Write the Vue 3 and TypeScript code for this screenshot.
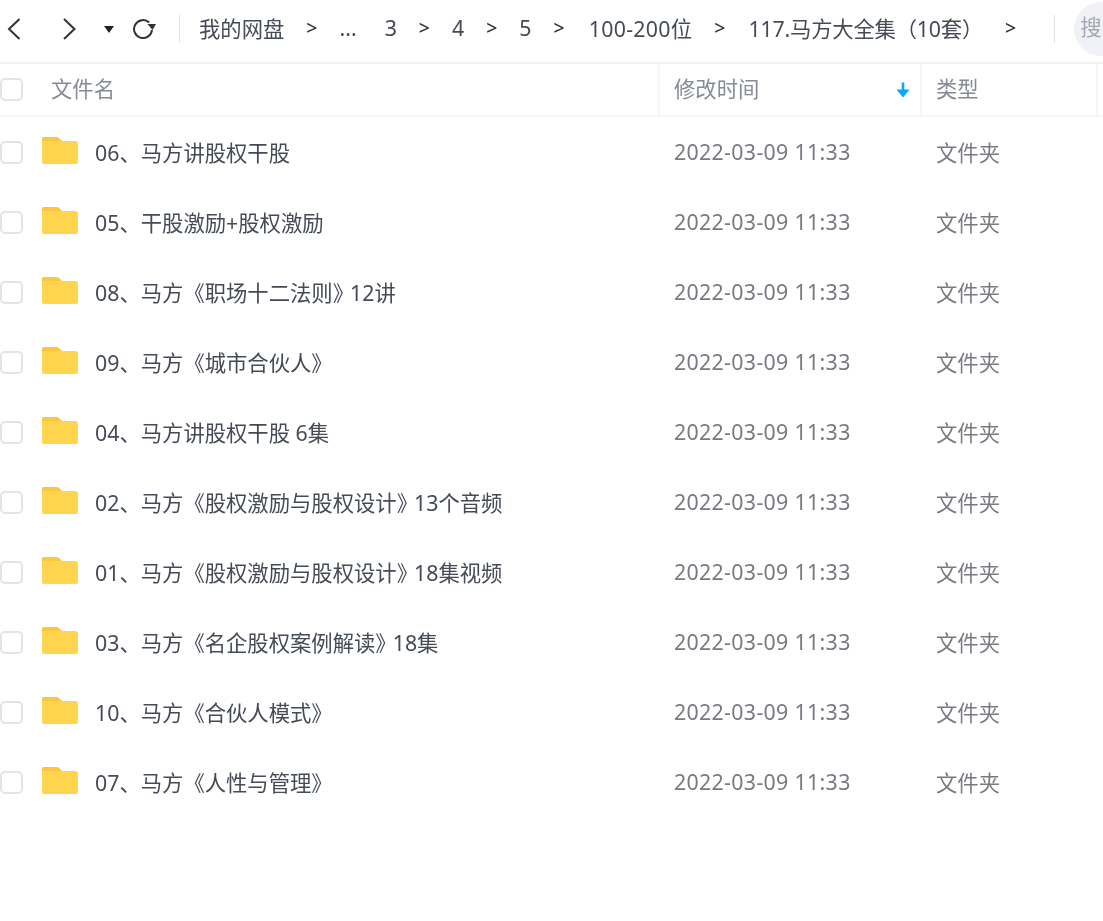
<script setup lang="ts">
interface FileRow { head: string; tail?: string }
interface Crumb { text: string; cls?: string }
const crumbs: Crumb[] = [
  { text: '4' },
  { text: '5' },
  { text: '100-200位', cls: 'wide' },
  { text: '117.马方大全集（10套）', cls: 'tight' },
]
const rows: FileRow[] = [
  { head: '06、马方讲股权干股' },
  { head: '05、干股激励+股权激励' },
  { head: '08、马方《职场十二法则', tail: '12讲' },
  { head: '09、马方《城市合伙人', tail: '' },
  { head: '04、马方讲股权干股 6集' },
  { head: '02、马方《股权激励与股权设计', tail: '13个音频' },
  { head: '01、马方《股权激励与股权设计', tail: '18集视频' },
  { head: '03、马方《名企股权案例解读', tail: '18集' },
  { head: '10、马方《合伙人模式', tail: '' },
  { head: '07、马方《人性与管理', tail: '' },
]
</script>

<template>
  <div class="page">
    <div class="toolbar">
      <svg class="nav back" width="14" height="24" viewBox="0 0 14 24"><path d="M12.5 2 L2 12 L12.5 22" /></svg>
      <svg class="nav forward" width="14" height="24" viewBox="0 0 14 24"><path d="M2 2 L12.5 12 L2 22" /></svg>
      <span class="caret"></span>
      <svg class="refresh" width="24" height="24" viewBox="0 0 24 24">
        <path d="M16.2 5.5 A9 9 0 1 0 19 13" fill="none" stroke="#333" stroke-width="2" />
        <path d="M14.5 7 H23 L19.5 13 Z" fill="#333" />
      </svg>
      <span class="divider"></span>
      <div class="crumbs">
        <span class="crumb">我的网盘</span>
        <span class="sep">&gt;</span>
        <span class="crumb dots">...</span>
        <span class="crumb">3</span>
        <template v-for="c in crumbs" :key="c.text">
          <span class="sep">&gt;</span>
          <span class="crumb" :class="c.cls">{{ c.text }}</span>
        </template>
        <span class="sep">&gt;</span>
      </div>
      <span class="divider end"></span>
      <div class="search">搜</div>
    </div>

    <div class="head">
      <div class="cell name-cell">
        <span class="check"></span>
        <span class="head-name label">文件名</span>
      </div>
      <div class="cell time-cell">
        <span class="label">修改时间</span>
        <svg class="sort" width="14" height="16" viewBox="0 0 14 16">
          <path d="M7 0.5 V10" stroke="#06a7ff" stroke-width="2.6" fill="none" />
          <path d="M0.5 7.5 H13.5 L7 15.5 Z" fill="#06a7ff" />
        </svg>
      </div>
      <div class="cell type-cell"><span class="label">类型</span></div>
      <div class="cell rest-cell"></div>
    </div>

    <div class="list">
      <div v-for="r in rows" :key="r.head" class="row">
        <div class="cell name-cell">
          <span class="check"></span>
          <svg class="folder" width="36" height="28" viewBox="0 0 36 28">
            <path d="M2 0 H14 Q16 0 17.5 1.5 L20 4 H33 Q36 4 36 7 V25 Q36 27 33 27 H3 Q0 27 0 25 V2 Q0 0 2 0 Z" fill="#ffd54f" />
            <path d="M2 0 H14 Q16 0 17.5 1.5 L20 4 H2 Q0 4 0 6 V2 Q0 0 2 0 Z" fill="#ffc53d" />
          </svg>
          <span class="file-name label">{{ r.head }}<template v-if="r.tail !== undefined"><span class="close">》</span>{{ r.tail }}</template></span>
        </div>
        <div class="cell time-cell body-time"><span class="label">2022-03-09 11:33</span></div>
        <div class="cell type-cell body-type"><span class="label">文件夹</span></div>
      </div>
    </div>
  </div>
</template>

<style>
html, body { margin: 0; background: #fff; }
</style>

<style scoped>
.page {
  width: 1103px;
  height: 921px;
  overflow: hidden;
  background: #fff;
  font-family: "Noto Sans", "Noto Sans CJK SC", sans-serif;
  font-size: 21.33px;
  filter: blur(0.4px);
}
.toolbar {
  height: 58px;
  padding: 0 0 4px 7px;
  display: flex;
  align-items: center;
  border-bottom: 2px solid #f1f2f4;
  white-space: nowrap;
}
.toolbar > * { flex: none; }
.nav path { fill: none; stroke: #333; stroke-width: 2; }
.forward { margin-left: 41px; }
.caret {
  margin-left: 28px;
  border-left: 5px solid transparent;
  border-right: 5px solid transparent;
  border-top: 7px solid #222;
}
.refresh { margin-left: 19px; }
.divider {
  width: 1px;
  height: 28px;
  background: #dfe1e5;
  margin-left: 22px;
}
.crumbs {
  display: flex;
  align-items: center;
  gap: 22px;
  margin-left: 19px;
  padding-bottom: 3px;
}
.crumb { color: #454b55; }
.crumb.wide { letter-spacing: 0.28px; margin-left: 2px; }
.crumb.tight { letter-spacing: -0.2px; margin-left: 1px; }
.sep { color: #333; font-size: 19.5px; font-weight: 500; }
.dots { margin-right: 6px; }
.divider.end { margin-left: 38px; }
.search {
  margin-left: 19px;
  width: 120px;
  height: 54px;
  line-height: 50px;
  padding-left: 6px;
  border-radius: 27px;
  background: #f1f2f7;
  color: #a4a8b2;
  box-sizing: border-box;
  overflow: hidden;
}
.head {
  height: 51px;
  display: flex;
  border-bottom: 2px solid #f5f6f7;
  color: #858a94;
}
.cell {
  display: flex;
  align-items: center;
  box-sizing: border-box;
  flex: none;
}
.label { padding-bottom: 2px; }
.head .label { padding-bottom: 4px; }
.name-cell { width: 660px; }
.time-cell { width: 262px; padding-left: 14px; }
.type-cell { width: 176px; padding-left: 14px; }
.rest-cell { flex: 1; }
.head .name-cell, .head .time-cell, .head .type-cell { border-right: 2px solid #f5f6f7; }
.head .time-cell { justify-content: space-between; padding-right: 10px; }
.check {
  width: 23px;
  height: 23px;
  border: 2px solid #e3e4e6;
  border-radius: 5px;
  box-sizing: border-box;
  background: #fff;
  flex: none;
}
.head-name { margin-left: 28px; }
.row { height: 70px; display: flex; }
.folder { margin-left: 19px; flex: none; margin-top: -3px; }
.file-name { margin-left: 17px; color: #454b55; white-space: nowrap; }
.close { letter-spacing: -4px; }
.body-time { color: #777a80; letter-spacing: 0.33px; }
.body-type { color: #777a80; }
</style>
